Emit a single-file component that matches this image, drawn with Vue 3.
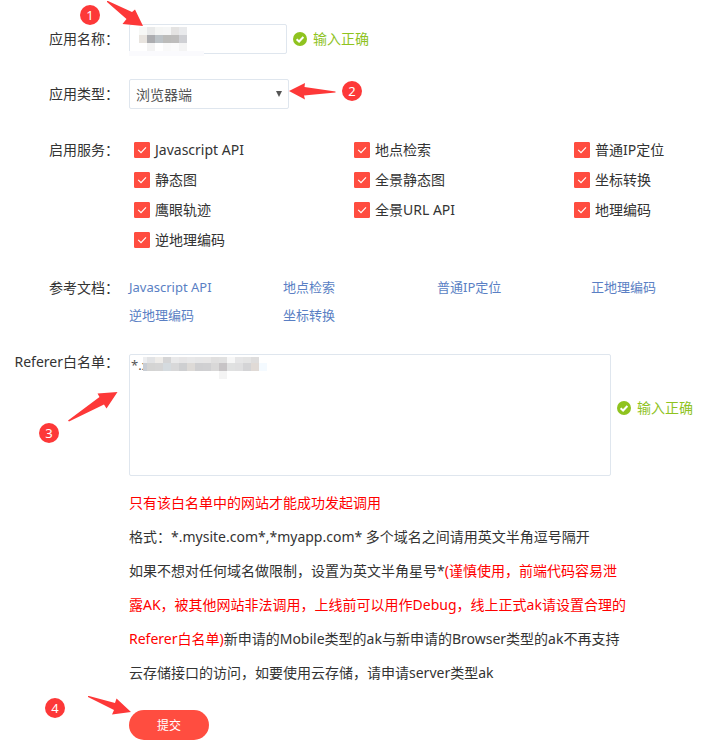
<script setup>
import { ref } from 'vue'

const appType = ref('browser')
const referer = ref('*.x')

const services = ref([
  { id: 'js', name: 'Javascript API', checked: true },
  { id: 'place', name: '地点检索', checked: true },
  { id: 'ip', name: '普通IP定位', checked: true },
  { id: 'static', name: '静态图', checked: true },
  { id: 'panorama', name: '全景静态图', checked: true },
  { id: 'convert', name: '坐标转换', checked: true },
  { id: 'trace', name: '鹰眼轨迹', checked: true },
  { id: 'panorama-url', name: '全景URL API', checked: true },
  { id: 'geocoder', name: '地理编码', checked: true },
  { id: 'regeocoder', name: '逆地理编码', checked: true }
])

const docs = ['Javascript API', '地点检索', '普通IP定位', '正地理编码', '逆地理编码', '坐标转换']

// mosaic tiles, one array per row
const nameTiles = [
  ['#f7f8f6', '#e9eaea', '#f4f5f4', '#f5f6f6', '#e4e3e2', '#e9eaec'],
  ['#e8e4df', '#acadb0', '#bcc2c6', '#bcbcba', '#bebdbc', '#cfd0d4'],
  ['#ffffff', '#f3f3f3', '#ffffff', '#f9f9f9', '#fbfbfb', '#f4f4f4']
]
const refererTiles = [
  ['#e2e3e5', '#eeece9', '#d5d5d6', '#e9e9ea', '#e6e5e6', '#e8e8e9', '#e6e6e7', '#e7e6e6', '#e0dfdf', '#e1e1e1', '#f7f7f7', '#e6e6e7', '#e4e4e4', '#dedddd'],
  ['#d4d4d3', '#d5d5d5', '#d5dbdf', '#d8d8d9', '#cecfd1', '#dddad7', '#cfcfd1', '#d0d0d2', '#d9d8d8', '#c7c4c6', '#e0e1e1', '#dfdfe0', '#d4d4d6', '#e0dad6']
]
</script>

<template>
  <form class="app-form" @submit.prevent>
    <div class="row name-row">
      <label class="row-label" for="app-name">应用名称：</label>
      <div class="row-body inline">
        <div class="field">
          <input id="app-name" class="text-input" type="text">
          <svg class="name-mosaic" width="75" height="32" viewBox="0 0 75 32" aria-hidden="true">
            <rect x="2" y="1" width="8" height="26" fill="#fff" />
            <rect x="0" y="27" width="75" height="5" fill="#fafafd" />
            <g v-for="(line, r) in nameTiles" :key="r">
              <rect v-for="(c, i) in line" :key="i" :x="10 + i * 8" :y="3 + r * 8" width="8" height="8" :fill="c" />
            </g>
          </svg>
        </div>
        <span class="valid">
          <svg width="14" height="14" viewBox="0 0 14 14" aria-hidden="true">
            <circle cx="7" cy="7" r="7" fill="#8fc31f" />
            <path d="M3.6 7.2 6.1 9.5 10.4 5" fill="none" stroke="#fff" stroke-width="2" />
          </svg>
          输入正确
        </span>
      </div>
    </div>

    <div class="row type-row">
      <label class="row-label" for="app-type">应用类型：</label>
      <div class="row-body">
        <div class="select-wrap">
          <select id="app-type" v-model="appType">
            <option value="browser">浏览器端</option>
            <option value="server">服务端</option>
          </select>
          <svg class="caret" width="6" height="6" viewBox="0 0 6 6" aria-hidden="true">
            <path d="M0 0h6L3 6z" fill="#555" />
          </svg>
        </div>
      </div>
    </div>

    <div class="row service-row">
      <span id="service-label" class="row-label">启用服务：</span>
      <div class="row-body services" role="group" aria-labelledby="service-label">
        <label v-for="s in services" :key="s.id" class="service">
          <input v-model="s.checked" type="checkbox">
          <svg class="tick" width="16" height="16" viewBox="0 0 16 16" aria-hidden="true">
            <path d="M4.2 7.8 7 10.6 12 5.4" fill="none" stroke="#fff" stroke-width="1.2" />
          </svg>
          <span>{{ s.name }}</span>
        </label>
      </div>
    </div>

    <div class="row doc-row">
      <span class="row-label">参考文档：</span>
      <div class="row-body docs">
        <a v-for="d in docs" :key="d" href="#">{{ d }}</a>
      </div>
    </div>

    <div class="row referer-row">
      <label class="row-label" for="referer">Referer白名单：</label>
      <div class="row-body">
        <div class="inline">
          <div class="field">
            <textarea id="referer" v-model="referer"></textarea>
            <svg class="area-mosaic" width="124" height="22" viewBox="0 0 124 22" aria-hidden="true">
              <rect x="0" y="0" width="4" height="6" fill="#edeef0" />
              <rect x="0" y="6" width="4" height="8" fill="#c8cdd4" />
              <g v-for="(line, r) in refererTiles" :key="r">
                <rect v-for="(c, i) in line" :key="i" :x="4 + i * 8" :y="r * 6" width="8" :height="r ? 8 : 6" :fill="c" />
              </g>
              <rect x="76" y="14" width="8" height="8" fill="#f4f4f4" />
              <rect x="116" y="6" width="8" height="8" fill="#f4faff" />
            </svg>
          </div>
          <span class="valid area-valid">
            <svg width="14" height="14" viewBox="0 0 14 14" aria-hidden="true">
              <circle cx="7" cy="7" r="7" fill="#8fc31f" />
              <path d="M3.6 7.2 6.1 9.5 10.4 5" fill="none" stroke="#fff" stroke-width="2" />
            </svg>
            输入正确
          </span>
        </div>
        <div class="help">
          <p class="warn">只有该白名单中的网站才能成功发起调用</p>
          <p>格式：*.mysite.com*,*myapp.com* 多个域名之间请用英文半角逗号隔开</p>
          <p>如果不想对任何域名做限制，设置为英文半角星号*<span class="warn">(谨慎使用，前端代码容易泄露AK，被其他网站非法调用，上线前可以用作Debug，线上正式ak请设置合理的Referer白名单)</span>新申请的Mobile类型的ak与新申请的Browser类型的ak不再支持云存储接口的访问，如要使用云存储，请申请server类型ak</p>
        </div>
        <button class="submit" type="submit">提交</button>
      </div>
    </div>

    <!-- step markers over the form -->
    <span class="step step-1">1</span>
    <span class="step step-2">2</span>
    <span class="step step-3">3</span>
    <span class="step step-4">4</span>
    <svg class="arrow arrow-1" width="36" height="25" viewBox="0 0 36 25" aria-hidden="true">
      <path d="M0 0 1 0 25 11 28 8.500 36 25 15.500 23 19.500 18 0 1z" />
    </svg>
    <svg class="arrow arrow-2" width="47" height="17" viewBox="0 0 47 17" aria-hidden="true">
      <path d="M0 8 16 0 15.500 4 46.500 8.500 46.500 9.500 15 12.500 16 16.500z" />
    </svg>
    <svg class="arrow arrow-3" width="50" height="30" viewBox="0 0 50 30" aria-hidden="true">
      <path d="M49.500 0 38.500 16.500 36 12.500 1 29.500 0 28.500 31.500 5 29.500 1.500z" />
    </svg>
    <svg class="arrow arrow-4" width="43" height="19" viewBox="0 0 43 19" aria-hidden="true">
      <path d="M0 0 1 0 27 7 28.500 2.500 43 16 24 18.500 26 14 0 1z" />
    </svg>
  </form>
</template>

<style>
body {
  margin: 0;
  background: #fff;
}
</style>

<style scoped>
.app-form {
  position: relative;
  padding-top: 24px;
  font-family: "Noto Sans", "Noto Sans CJK SC", sans-serif;
  font-size: 14px;
  line-height: 30px;
  color: #333;
}

.app-form * { box-sizing: border-box; }

/* rows */
.row {
  display: flex;
  gap: 10px;
}

.row-label {
  width: 119px;
  flex-shrink: 0;
  text-align: right;
  white-space: nowrap;
}

.row-body {
  flex: 1;
  min-width: 0;
}

.type-row { margin-top: 25px; }
.service-row { margin-top: 26px; }
.doc-row { margin-top: 18px; }
.referer-row { margin-top: 25px; }
.referer-row .row-label { line-height: 16px; }

.inline {
  display: flex;
  align-items: center;
  gap: 6px;
}

.field {
  position: relative;
  flex-shrink: 0;
}

/* controls */
.text-input,
select,
textarea {
  display: block;
  margin: 0;
  border: 1px solid #dfe6ee;
  border-radius: 2px;
  background: #fff;
  font-family: inherit;
  color: #555;
  outline: none;
}

.text-input {
  width: 158px;
  height: 30px;
  padding: 0 8px;
  font-size: 14px;
}

.select-wrap {
  position: relative;
  width: 160px;
}

select {
  appearance: none;
  width: 100%;
  height: 30px;
  padding: 0 20px 0 6px;
  font-size: 14px;
}

.caret {
  position: absolute;
  right: 7px;
  top: 12px;
}

textarea {
  width: 482px;
  height: 122px;
  padding: 1px;
  font-size: 13px;
  line-height: 18px;
  resize: none;
}

.name-mosaic {
  position: absolute;
  left: 0;
  top: 0;
}

.area-mosaic {
  position: absolute;
  left: 14px;
  top: 3px;
}

.valid {
  display: flex;
  align-items: center;
  gap: 6px;
  line-height: 28px;
  color: #8fc31f;
  white-space: nowrap;
}

.area-valid { padding-bottom: 15px; }

/* services */
.services {
  display: grid;
  grid-template-columns: 220px 220px auto;
  padding-left: 5px;
}

.service {
  position: relative;
  display: flex;
  align-items: center;
  gap: 5px;
  white-space: nowrap;
}

.service input {
  appearance: none;
  width: 16px;
  height: 16px;
  margin: 0;
  border: 1px solid #ff4d40;
  border-radius: 1px;
  background: #fff;
}

.service input:checked { background: #ff4d40; }

.tick {
  position: absolute;
  left: 0;
  top: 7px;
  pointer-events: none;
}

/* docs */
.docs {
  display: grid;
  grid-template-columns: 154px 154px 154px auto;
  font-size: 13px;
  line-height: 28px;
}

.docs a {
  color: #5a7fc4;
  text-decoration: none;
  white-space: nowrap;
}

/* help */
.help {
  max-width: 500px;
  margin-top: 10px;
  line-height: 34px;
}

.help p { margin: 0; }

.warn { color: #f00; }

.submit {
  display: block;
  width: 80px;
  height: 30px;
  margin-top: 20px;
  padding: 0;
  border: 0;
  border-radius: 15px;
  background: #ff4d40;
  color: #fff;
  font-family: inherit;
  font-size: 12px;
  cursor: pointer;
}

/* step markers */
.step {
  position: absolute;
  width: 20px;
  height: 20px;
  border-radius: 50%;
  background: #fd3838;
  color: #fff;
  font-size: 13px;
  line-height: 20px;
  text-align: center;
}

.step-1 { left: 80px; top: 5px; }
.step-2 { left: 342px; top: 81px; }
.step-3 { left: 39px; top: 423px; }
.step-4 { left: 45px; top: 698px; }

.arrow {
  position: absolute;
  fill: #fd3838;
}

.arrow-1 { left: 107px; top: 1px; }
.arrow-2 { left: 289px; top: 83px; }
.arrow-3 { left: 68px; top: 392px; }
.arrow-4 { left: 88px; top: 696px; }
</style>
